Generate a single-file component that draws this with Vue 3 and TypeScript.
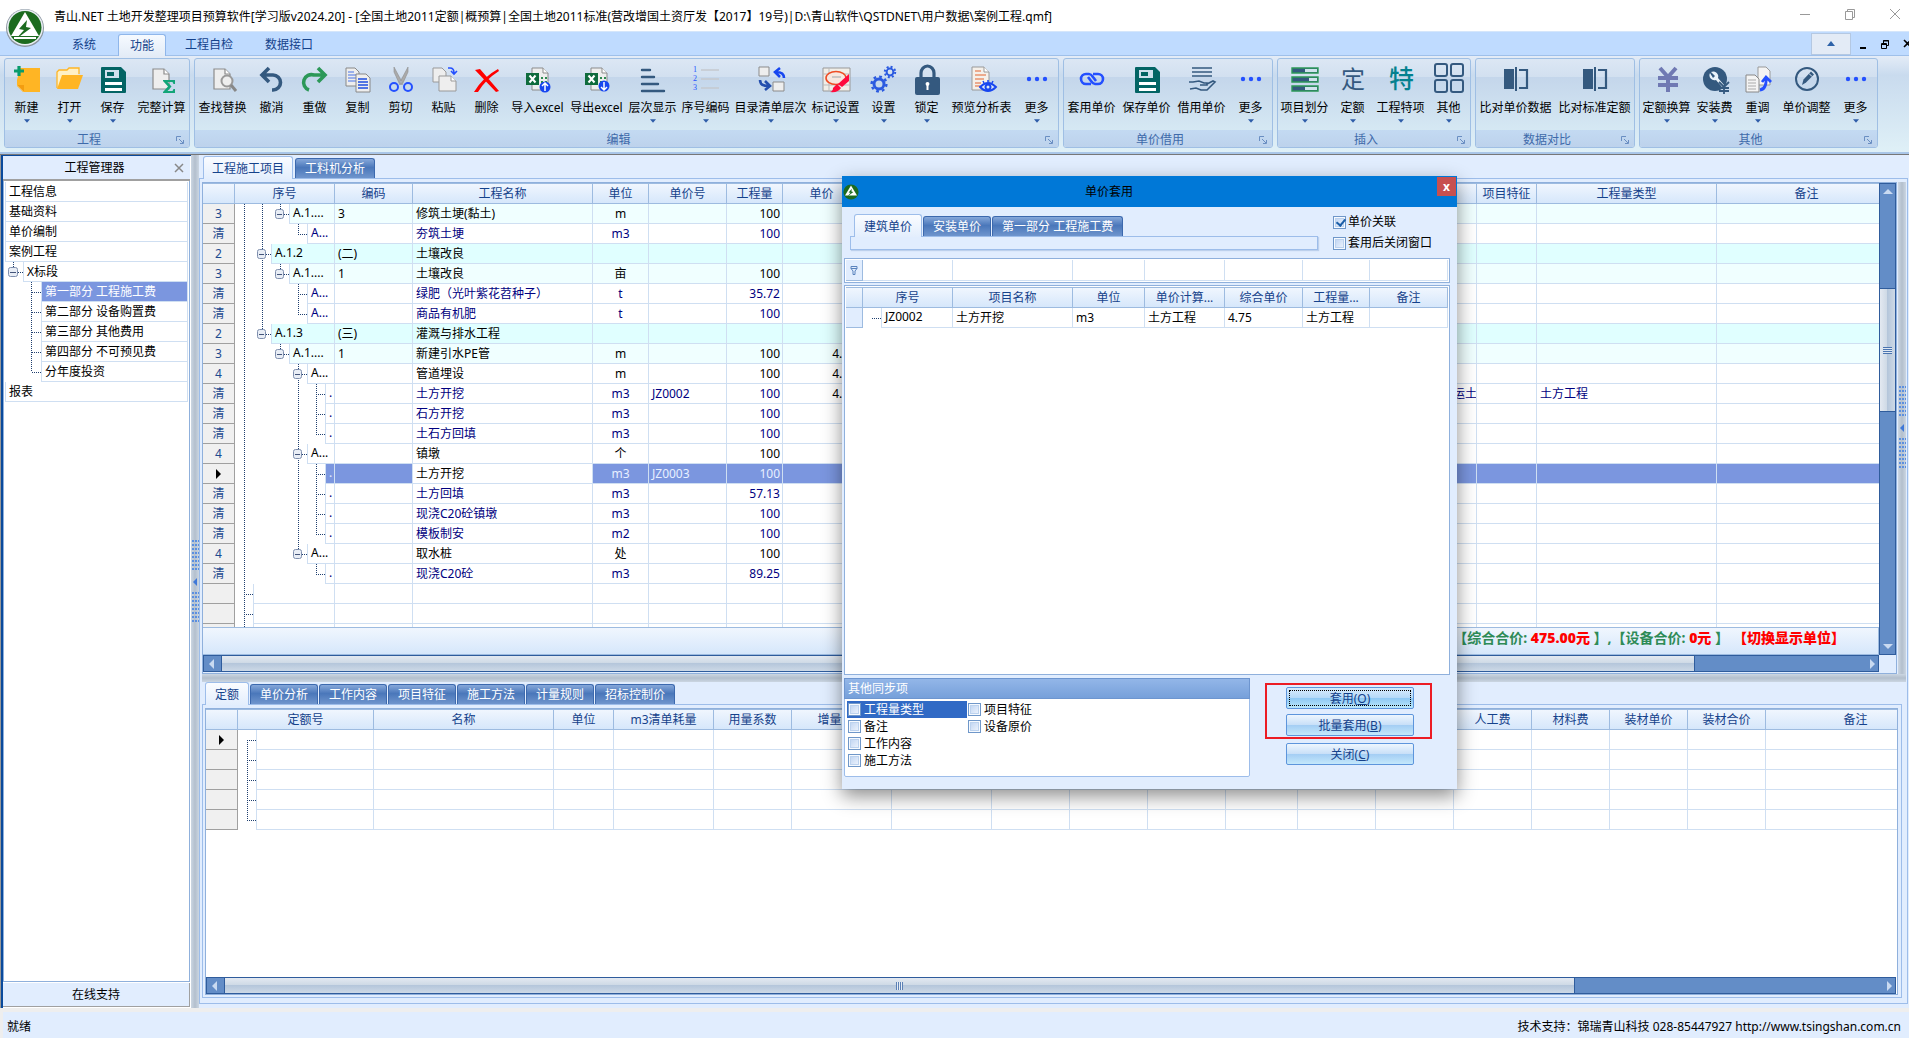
<script setup lang="ts">
import { ref } from 'vue'

interface RibbonItem { label: string; icon: string; width: number; arrow?: boolean }
interface RibbonGroup { name: string; items: RibbonItem[] }
interface Branch { depth: number; full?: number[]; top?: boolean; more?: boolean; box?: boolean }
interface CostRow extends Branch { mark: string; no: string; code?: string; name?: string; unit?: string; priceNo?: string; qty?: string; price?: string; work?: string; kind?: string; tone?: string }
interface Column { title: string; width: number }

const page = '<path d="M5 3h11l5 5v15H5z" fill="#eee" stroke="#8b8b8b" stroke-width="1.2"/><path d="M16 3v5h5" fill="#fff" stroke="#8b8b8b" stroke-width="1.2"/>'
const floppy = '<path d="M3 1h19l5 5v20q0 1-1 1H3q-1 0-1-1V2q0-1 1-1z" fill="#036464"/><path d="M6 4h14v8H6z" fill="#cfe0ee"/><path d="M8 6h10v4H8z" fill="#036464"/><path d="M15 5h3v5h-3z" fill="#cfe0ee"/><path d="M6 16h17v3H6zm0 6h17v3H6z" fill="#fff"/>'
const excel = '<path d="M8 2h11l5 5v17H8z" fill="#eee" stroke="#8b8b8b"/><path d="M19 2v5h5" fill="#fff" stroke="#8b8b8b"/><path d="M17 11h2v2h-2zm4 0h2v2h-2zm-4 4h2v2h-2zm4 0h2v2h-2z" fill="#2c8a50"/><path d="M2 7h13v12H2z" fill="#0f6b3c"/><path d="M5.500 9.500l6 7m0-7l-6 7" stroke="#fff" stroke-width="2"/>'
const compare = '<path d="M2 3h10v20H2z" fill="#34597f"/><path d="M13 1h2v24h-2z" fill="#34597f"/><path d="M17 4h8v18h-8" fill="none" stroke="#34597f" stroke-width="2.200"/>'
const dots = '<circle cx="6" cy="13" r="2.200" fill="#2450ff"/><circle cx="14" cy="13" r="2.200" fill="#2450ff"/><circle cx="22" cy="13" r="2.200" fill="#2450ff"/>'

const icons: Record<string, string> = {
  create: '<path d="M7 2h20v24H10l-6-6v-6z" fill="#ffb524"/><path d="M4 19h7v7z" fill="#fff3cf"/><path d="M4 19h7v7" fill="#f39d10"/><path d="M6 0v10M1 5h10" stroke="#099b6b" stroke-width="3.200"/>',
  open: '<path d="M1 22V6l2-2h8l2-2h10v6" fill="#fff0c4" stroke="#ffb524" stroke-width="1.300"/><path d="M1 23L6 9h21l-5 14z" fill="#ffb524"/>',
  save: floppy,
  calc: page + '<path d="M15 14h12v4h-1.500l-1-2h-5l4 4.500-4 4.500h5l1-2H27v4H15v-1l5-5.500-5-5.500z" fill="#13a578"/>',
  find: page + '<circle cx="18" cy="15" r="5.500" fill="#eee" stroke="#999" stroke-width="2"/><path d="M22 19l5 6" stroke="#888" stroke-width="3"/>',
  undo: '<path d="M11 2L4 9l7 7M5 9h10a7 7 0 0 1 0 15h-1" fill="none" stroke="#34597f" stroke-width="3.600"/>',
  redo: '<path d="M17 2l7 7-7 7M23 9H13a7 7 0 0 0-5 15" fill="none" stroke="#2c9858" stroke-width="3.600"/>',
  copy: '<path d="M2 2h9l4 4v14H2z" fill="#eee" stroke="#888"/><path d="M4 6h6M4 9h8M4 12h8M4 15h8" stroke="#4673e8"/><path d="M12 8h10l4 4v14H12z" fill="#eee" stroke="#888"/><path d="M14 13h9M14 16h10M14 19h10M14 22h10" stroke="#1e4de0" stroke-width="1.400"/>',
  cut: '<path d="M7 1l8 15-2 3L7 6zM21 1l-8 15 2 3 6-13z" fill="#aaa" stroke="#8e8e8e" stroke-width=".6"/><circle cx="7" cy="21" r="4" fill="none" stroke="#2450ff" stroke-width="2"/><circle cx="21" cy="21" r="4" fill="none" stroke="#2450ff" stroke-width="2"/>',
  paste: '<path d="M3 2h9l4 4v10H3z" fill="#eee" stroke="#999"/><path d="M9 10h12l5 5v10H9z" fill="#eee" stroke="#999"/><path d="M21 10v5h5" fill="#fff" stroke="#999"/><path d="M18 2h2q4 0 4 5m-3-2l3 3 3-3" fill="none" stroke="#2450ff" stroke-width="1.600"/>',
  remove: '<path d="M2 4l5-1 19 22-3 1zM25 3l1 2Q12 14 5 26H1Q10 11 25 3z" fill="#f00"/>',
  importx: excel + '<circle cx="21" cy="21" r="5.500" fill="#1746f0"/><path d="M21 25v-8m-3 3l3-3 3 3" fill="none" stroke="#fff" stroke-width="1.500"/>',
  exportx: excel + '<circle cx="21" cy="20" r="5.500" fill="#1746f0"/><path d="M21 16v8m-3-3l3 3 3-3" fill="none" stroke="#fff" stroke-width="1.500"/>',
  level: '<path d="M3 4h8M3 11h12M3 18h16M3 25h22" stroke="#34597f" stroke-width="2.400" stroke-linecap="round"/>',
  number: '<g font-family="Liberation Serif,serif" font-size="8" fill="#2450ff"><text x="1" y="6">1</text><text x="1" y="15">2</text><text x="1" y="24">3</text></g><path d="M9 4h18M9 13h18M9 22h18" stroke="#c5c9ce" stroke-width="1.400"/>',
  catalog: '<path d="M2 1h10v9H2zM16 16h11v9H16z" fill="#eee" stroke="#8b8b8b"/><path d="M27 12q0-6-8-6m4-4l-5 4 5 5" fill="none" stroke="#1746f0" stroke-width="2.600"/><path d="M3 14q0 6 8 6m-3-5l5 5-5 4" fill="none" stroke="#234eae" stroke-width="2.600"/>',
  mark: '<path d="M1 2h27v23H1z" fill="#f0eee8" stroke="#999"/><path d="M7 2v23M1 8h27M1 19h27" stroke="#bbb"/><ellipse cx="14" cy="12" rx="10" ry="6.500" fill="#f7e7df" stroke="#ee4d25" stroke-width="1.600"/><path d="M10 11h9" stroke="#bbb" stroke-width="1.500"/><path d="M27 8v7l-7 6-4-3z" fill="#ff0a3c"/><path d="M15 18l4 4q-3 5-11 4 3-1 3-4z" fill="#ff0a3c"/>',
  gears: '<circle cx="9" cy="18" r="5" fill="none" stroke="#2b5ae0" stroke-width="3"/><circle cx="9" cy="18" r="7.400" fill="none" stroke="#2b5ae0" stroke-width="2.400" stroke-dasharray="2.800 3"/><circle cx="20" cy="6" r="3.400" fill="none" stroke="#2b5ae0" stroke-width="2"/><circle cx="20" cy="6" r="5.200" fill="none" stroke="#2b5ae0" stroke-width="2" stroke-dasharray="2 2.080"/>',
  lock: '<path d="M8 13V7a6.500 7 0 0 1 13 0v6" fill="none" stroke="#34597f" stroke-width="3.200"/><rect x="2" y="11" width="25" height="18" rx="2" fill="#34597f"/><path d="M12.500 18a2 2 0 1 1 4 0l-1 2v4h-2v-4z" fill="#fff"/>',
  preview: '<path d="M4 1h12l5 5v18H4z" fill="#f5f0ea" stroke="#999"/><path d="M16 1v5h5" fill="#fff" stroke="#999"/><path d="M7 5h6M7 9h11M7 13h9M7 17h6M7 20h5" stroke="#e9926f" stroke-width="1.300"/><path d="M12 21q8-8 16 0-8 8-16 0z" fill="#dce8f6" stroke="#1746f0" stroke-width="1.800"/><circle cx="20" cy="21" r="2.500" fill="none" stroke="#1746f0" stroke-width="2"/><path d="M15 15l1 2m4-3v2m5-1l-1 2" stroke="#1746f0" stroke-width="1.500"/>',
  dots,
  chain: '<path d="M13 18H8a5 5 0 0 1 0-10h3q2 0 4 3l3 4M15 8h5a5 5 0 0 1 0 10h-3q-2 0-4-3l-3-4" fill="none" stroke="#2450ff" stroke-width="2.600"/>',
  hand: '<path d="M4 2h20M4 6h20M4 10h20" stroke="#34597f" stroke-width="1.600"/><path d="M1 16h4l6-1 5 2 3 0v2h-7M19 18l6-3 2 1-8 8h-6l-5-2-6 1" fill="none" stroke="#34597f" stroke-width="1.600"/>',
  division: '<g fill="#34597f" stroke="#2c9858" stroke-width="1.400"><path d="M1 2h26v5H1zM1 11h26v5H1zM1 20h26v5H1z"/></g><path d="M14 3h12v3H14zm0 18h12v3H14zm4-9h8v3h-8z" fill="#cfe3ee"/>',
  quota: '<text x="2" y="22" font-family="Noto Sans CJK SC,sans-serif" font-size="24" fill="#34597f">定</text>',
  special: '<text x="2" y="22" font-family="Noto Sans CJK SC,sans-serif" font-size="25" font-weight="500" fill="#04818f">特</text>',
  blocks: '<g fill="none" stroke="#34597f" stroke-width="2"><rect x="0" y="-2" width="12" height="12" rx="2"/><rect x="16" y="-2" width="12" height="12" rx="2"/><rect x="0" y="14" width="12" height="12" rx="2"/><rect x="16" y="14" width="12" height="12" rx="2"/></g>',
  compare,
  yen: '<path d="M7 2l8 9 8-9M15 11v15M5 12h20M5 19h20" fill="none" stroke="#7079b3" stroke-width="4"/>',
  wrench: '<circle cx="14" cy="13" r="12" fill="#34597f"/><path d="M9 7a5 5 0 0 0 6 7l6 7 2-2-6-7a5 5 0 0 0-7-6l4 4-2 2z" fill="#eaf2fa"/><path d="M18 16l5 5 5-5M23 21v7M18 22h10M18 25h10" fill="none" stroke="#34597f" stroke-width="1.800"/>',
  readjust: '<path d="M14 1h8l4 4v14H14z" fill="#f4f4f4" stroke="#999"/><path d="M2 9h9l4 4v13H2z" fill="#f4f4f4" stroke="#888"/><path d="M4 14h8M4 17h8M4 20h8M4 23h8" stroke="#aaa"/><path d="M16 24q7-1 6-13m-4 5l4-5 5 5" fill="none" stroke="#2450ff" stroke-width="2.800"/>',
  pencil: '<circle cx="14" cy="13" r="11" fill="none" stroke="#34597f" stroke-width="2"/><path d="M9 19l1.500-5.500L18 5.500l3 3-8 8z" fill="#34597f"/><path d="M16 7.500l3 3" stroke="#dfe9f5"/>'
}

const item = (label: string, icon: string, width: number, arrow = false): RibbonItem => ({ label, icon, width, arrow })
const groups: RibbonGroup[] = [
  { name: '工程', items: [item('新建', 'create', 43, true), item('打开', 'open', 43, true), item('保存', 'save', 43, true), item('完整计算', 'calc', 55)] },
  { name: '编辑', items: [
    item('查找替换', 'find', 55), item('撤消', 'undo', 43), item('重做', 'redo', 43), item('复制', 'copy', 43), item('剪切', 'cut', 43),
    item('粘贴', 'paste', 43), item('删除', 'remove', 43), item('导入excel', 'importx', 59), item('导出excel', 'exportx', 59),
    item('层次显示', 'level', 53, true), item('序号编码', 'number', 53, true), item('目录清单层次', 'catalog', 77, true), item('标记设置', 'mark', 53, true),
    item('设置', 'gears', 43, true), item('锁定', 'lock', 43, true), item('预览分析表', 'preview', 67), item('更多', 'dots', 43, true)] },
  { name: '单价借用', items: [item('套用单价', 'chain', 55), item('保存单价', 'save', 55), item('借用单价', 'hand', 55), item('更多', 'dots', 43, true)] },
  { name: '插入', items: [item('项目划分', 'division', 53, true), item('定额', 'quota', 43, true), item('工程特项', 'special', 53, true), item('其他', 'blocks', 43, true)] },
  { name: '数据对比', items: [item('比对单价数据', 'compare', 79), item('比对标准定额', 'compare', 79)] },
  { name: '其他', items: [item('定额换算', 'yen', 53, true), item('安装费', 'wrench', 43, true), item('重调', 'readjust', 43, true), item('单价调整', 'pencil', 55), item('更多', 'dots', 43, true)] }
]

const navRows: { label: string; level: number; last?: boolean }[] = [
  { label: '工程信息', level: 0 }, { label: '基础资料', level: 0 }, { label: '单价编制', level: 0 }, { label: '案例工程', level: 0 },
  { label: 'X标段', level: 1 },
  { label: '第一部分 工程施工费', level: 2 }, { label: '第二部分 设备购置费', level: 2 }, { label: '第三部分 其他费用', level: 2 },
  { label: '第四部分 不可预见费', level: 2 }, { label: '分年度投资', level: 2, last: true },
  { label: '报表', level: 0 }
]

const costColumns: Column[] = [
  { title: '', width: 32 }, { title: '序号', width: 100 }, { title: '编码', width: 78 }, { title: '工程名称', width: 180 }, { title: '单位', width: 56 },
  { title: '单价号', width: 78 }, { title: '工程量', width: 56 }, { title: '单价', width: 78 }, { title: '', width: 541 }, { title: '', width: 75 },
  { title: '项目特征', width: 60 }, { title: '工程量类型', width: 180 }, { title: '备注', width: 180 }
]
const sum = (columns: Column[]): number => columns.reduce((total, c) => total + c.width, 0)

const leaf = (name: string, unit: string, qty: string, full: number[], more: boolean, extra: Partial<CostRow> = {}): CostRow =>
  ({ mark: '清', no: '.', depth: 4, name, unit, qty, full, more, top: true, tone: 'leaf', ...extra })
const costRows: CostRow[] = [
  { mark: '3', no: 'A.1....', code: '3', name: '修筑土埂(黏土)', unit: 'm', qty: '100', depth: 2, full: [0, 1], top: true, box: true, tone: 'third' },
  leaf('夯筑土埂', 'm3', '100', [0, 1], false, { no: 'A...', depth: 3 }),
  { mark: '2', no: 'A.1.2', code: '(二)', name: '土壤改良', depth: 1, full: [0], top: true, more: true, box: true, tone: 'second' },
  { mark: '3', no: 'A.1....', code: '1', name: '土壤改良', unit: '亩', qty: '100', depth: 2, full: [0, 1], top: true, box: true, tone: 'third' },
  leaf('绿肥（光叶紫花苕种子）', 't', '35.72', [0, 1], true, { no: 'A...', depth: 3 }),
  leaf('商品有机肥', 't', '100', [0, 1], false, { no: 'A...', depth: 3 }),
  { mark: '2', no: 'A.1.3', code: '(三)', name: '灌溉与排水工程', depth: 1, full: [0], top: true, box: true, tone: 'second' },
  { mark: '3', no: 'A.1....', code: '1', name: '新建引水PE管', unit: 'm', qty: '100', price: '4.75', depth: 2, full: [0], top: true, box: true, tone: 'third' },
  { mark: '4', no: 'A...', name: '管道埋设', unit: 'm', qty: '100', price: '4.75', depth: 3, full: [0], top: true, more: true, box: true },
  leaf('土方开挖', 'm3', '100', [0, 3], true, { priceNo: 'JZ0002', price: '4.75', work: '自卸汽车运土', kind: '土方工程' }),
  leaf('石方开挖', 'm3', '100', [0, 3], true),
  leaf('土石方回填', 'm3', '100', [0, 3], false),
  { mark: '4', no: 'A...', name: '镇墩', unit: '个', qty: '100', depth: 3, full: [0], top: true, more: true, box: true },
  leaf('土方开挖', 'm3', '100', [0, 3], true, { mark: '▶', priceNo: 'JZ0003', tone: 'picked' }),
  leaf('土方回填', 'm3', '57.13', [0, 3], true),
  leaf('现浇C20砼镇墩', 'm3', '100', [0, 3], true),
  leaf('模板制安', 'm2', '100', [0, 3], false),
  { mark: '4', no: 'A...', name: '取水桩', unit: '处', qty: '100', depth: 3, full: [0], top: true, box: true },
  leaf('现浇C20砼', 'm3', '89.25', [0], false),
  { mark: '', no: '', depth: 0, top: true, more: true },
  { mark: '', no: '', depth: 0, top: true, more: true },
  { mark: '', no: '', depth: 0, top: true, more: true }
]

const treePath = (b: Branch): string => {
  const own = b.depth * 18 + 9
  let d = (b.full ?? []).map((level) => `M${level * 18 + 9}.5 0v20`).join('')
  if (b.top) d += `M${own}.5 0v10`
  if (b.more) d += `M${own}.5 10v10`
  return d + `M${own} 10.5h9`
}

const detailTabs = ['定额', '单价分析', '工作内容', '项目特征', '施工方法', '计量规则', '招标控制价']
const detailColumns: Column[] = [
  { title: '', width: 32 }, { title: '定额号', width: 136 }, { title: '名称', width: 180 }, { title: '单位', width: 60 }, { title: 'm3清单耗量', width: 100 },
  { title: '用量系数', width: 78 }, { title: '增量系数', width: 100 }, { title: '', width: 100 }, { title: '', width: 78 }, { title: '', width: 78 },
  { title: '', width: 78 }, { title: '', width: 72 }, { title: '', width: 78 }, { title: '', width: 78 }, { title: '人工费', width: 78 },
  { title: '材料费', width: 78 }, { title: '装材单价', width: 78 }, { title: '装材合价', width: 78 }, { title: '备注', width: 180 }
]

const dialogColumns: Column[] = [
  { title: '', width: 17 }, { title: '序号', width: 90 }, { title: '项目名称', width: 120 }, { title: '单位', width: 72 },
  { title: '单价计算...', width: 80 }, { title: '综合单价', width: 78 }, { title: '工程量...', width: 67 }, { title: '备注', width: 78 }
]
const syncItems = [['工程量类型', '备注', '工作内容', '施工方法'], ['项目特征', '设备原价']]

const linked = ref(true)
const closeAfter = ref(false)
const dialogOpen = ref(true)
</script>

<template>
  <div class="app">
    <header class="titlebar">
      <h1>青山.NET 土地开发整理项目预算软件[学习版v2024.20] - [全国土地2011定额|概预算|全国土地2011标准(营改增国土资厅发【2017】19号)|D:\青山软件\QSTDNET\用户数据\案例工程.qmf]</h1>
      <div class="window-buttons">
        <button type="button" aria-label="最小化"><svg width="12" height="12"><path d="M1 6.500h10" stroke="#999" /></svg></button>
        <button type="button" aria-label="还原"><svg width="12" height="12" fill="none" stroke="#999"><path d="M1.500 3.500h7v8h-7zM3.500 3V1.500h7v8H9" /></svg></button>
        <button type="button" aria-label="关闭"><svg width="12" height="12"><path d="M1 1l10 10M11 1L1 11" stroke="#999" /></svg></button>
      </div>
    </header>

    <svg class="app-logo" viewBox="0 0 40 40" aria-hidden="true">
      <circle cx="20" cy="20" r="19" fill="#8b95a0" /><circle cx="20" cy="19.500" r="18" fill="#e9eff4" /><circle cx="20" cy="19.500" r="16.500" fill="#1c6b1f" />
      <path d="M20 4L6 28h28z" fill="#fff" /><path d="M22 12l-8 9 5 1-8 9 15-11-5-1z" fill="#1c6b1f" /><path d="M9 30h22" stroke="#fff" stroke-width="2" />
    </svg>

    <nav class="ribbon-tabs">
      <button type="button" class="ribbon-tab short">系统</button>
      <button type="button" class="ribbon-tab short on">功能</button>
      <button type="button" class="ribbon-tab">工程自检</button>
      <button type="button" class="ribbon-tab">数据接口</button>
      <div class="mdi-buttons">
        <button type="button" class="collapse" aria-label="折叠功能区"><svg width="8" height="5"><path d="M0 5l4-5 4 5z" fill="#2d62a8" /></svg></button>
        <button type="button" aria-label="最小化子窗口"><svg width="12" height="12"><path d="M3 9h6v2H3z" /></svg></button>
        <button type="button" aria-label="还原子窗口"><svg width="12" height="12" fill="none" stroke="#000"><path d="M2.500 5.500h5v5h-5zM2 6.500h6M4.500 5V2.500h5v5H8M4 3h6" /></svg></button>
        <button type="button" aria-label="关闭子窗口"><svg width="12" height="12"><path d="M3 2l7 7M10 2L3 9" stroke="#000" stroke-width="1.600" /></svg></button>
      </div>
    </nav>

    <div class="ribbon">
      <section v-for="group in groups" :key="group.name" class="ribbon-group">
        <div class="ribbon-items">
          <button v-for="entry in group.items" :key="entry.label" type="button" class="ribbon-item" :style="{ width: entry.width + 'px' }">
            <svg class="ribbon-icon" viewBox="0 0 28 28" aria-hidden="true" v-html="icons[entry.icon]"></svg>
            <span>{{ entry.label }}</span>
            <svg v-if="entry.arrow" class="ribbon-arrow" viewBox="0 0 5 3" aria-hidden="true"><path d="M0 0h5L2.500 3z" fill="#2d5ca8" /></svg>
          </button>
        </div>
        <div class="ribbon-caption">
          <span>{{ group.name }}</span>
          <svg width="8" height="8" fill="none" stroke="#6a8ec2" aria-hidden="true"><path d="M.5 5V.5H5M3 3l4 4M7.500 4v3.500H4" /></svg>
        </div>
      </section>
    </div>

    <div class="workspace">
      <aside class="sidebar">
        <div class="sidebar-head">
          <h2>工程管理器</h2>
          <button type="button" aria-label="关闭面板"><svg width="10" height="10"><path d="M1 1l8 8M9 1L1 9" stroke="#888" stroke-width="1.500" /></svg></button>
        </div>
        <ul class="nav-tree">
          <li v-for="(row, i) in navRows" :key="row.label">
            <svg v-if="row.level" class="nav-lines" :width="row.level * 18" height="20" aria-hidden="true">
              <path v-if="row.level === 1" d="M8.500 0v10M9 10.500h9" class="dotted" />
              <path v-else :d="row.last ? 'M26.5 0v10M27 10.5h9' : 'M26.5 0v20M27 10.5h9'" class="dotted" />
              <g v-if="row.level === 1"><rect x="3.500" y="5.500" width="9" height="9" rx="2" fill="#e8edf5" stroke="#7f8fae" /><path d="M5 10.500h6" stroke="#44557a" /></g>
            </svg>
            <a href="#" :class="{ on: i === 5 }">{{ row.label }}</a>
          </li>
        </ul>
        <button type="button" class="support">在线支持</button>
      </aside>

      <div class="side-splitter"><i class="dots"></i><svg width="4" height="8"><path d="M4 0v8L0 4z" fill="#3f78d8" /></svg><i class="dots"></i></div>

      <main class="main">
        <div class="tabs main-tabs">
          <button type="button" class="tab on">工程施工项目</button>
          <button type="button" class="tab">工料机分析</button>
        </div>
        <div class="main-page">
          <div class="top-pane">
            <div class="grid-frame cost-frame">
              <div class="viewport">
                <table :style="{ width: sum(costColumns) + 'px' }">
                  <colgroup><col v-for="(c, i) in costColumns" :key="i" :style="{ width: c.width + 'px' }" /></colgroup>
                  <thead><tr><th v-for="(c, i) in costColumns" :key="i" scope="col">{{ c.title }}</th></tr></thead>
                  <tbody>
                    <tr v-for="(row, r) in costRows" :key="r" :class="row.tone">
                      <td class="mark"><svg v-if="row.mark === '▶'" width="5" height="10"><path d="M0 0l5 5-5 5z" /></svg><template v-else>{{ row.mark }}</template></td>
                      <td class="tree-cell">
                        <div class="tree">
                          <svg :width="row.depth * 18 + 18" height="20" aria-hidden="true">
                            <path :d="treePath(row)" class="dotted" />
                            <g v-if="row.box" :transform="`translate(${row.depth * 18 + 4} 5)`"><rect x=".5" y=".5" width="8" height="9" rx="2" fill="#e8edf5" stroke="#7f8fae" /><path d="M2 5.500h5" stroke="#44557a" /></g>
                          </svg>
                          <span>{{ row.no }}</span>
                        </div>
                      </td>
                      <td>{{ row.code }}</td>
                      <td class="name">{{ row.name }}</td>
                      <td class="center">{{ row.unit }}</td>
                      <td>{{ row.priceNo }}</td>
                      <td class="right">{{ row.qty }}</td>
                      <td class="right dark">{{ row.price }}</td>
                      <td></td>
                      <td>{{ row.work }}</td>
                      <td></td>
                      <td>{{ row.kind }}</td>
                      <td></td>
                    </tr>
                  </tbody>
                </table>
              </div>
              <div class="summary">
                <span>【综合合价: <b>475.00元</b> 】,</span><span>【设备合价: <b>0元</b> 】</span><b>【切换显示单位】</b>
              </div>
              <div class="hscroll">
                <i class="knob"></i><i class="thumb cost-thumb"></i><i class="rail"></i>
              </div>
              <div class="vscroll">
                <svg width="10" height="5"><path d="M0 5l5-5 5 5z" fill="#c9daf1" /></svg>
                <i class="vthumb"></i><i class="vrail"></i>
                <svg width="10" height="5"><path d="M0 0h10L5 5z" fill="#c9daf1" /></svg>
              </div>
            </div>
            <div class="right-strip"><i class="dots"></i><svg width="4" height="8"><path d="M4 0v8L0 4z" fill="#3f78d8" /></svg><i class="dots"></i></div>
          </div>
          <div class="mid-splitter"></div>
          <div class="bottom-pane">
            <div class="tabs detail-tabs">
              <button v-for="(t, i) in detailTabs" :key="t" type="button" class="tab" :class="{ on: i === 0 }">{{ t }}</button>
            </div>
            <div class="detail-page">
              <div class="grid-frame detail-frame">
                <div class="viewport">
                  <table :style="{ width: sum(detailColumns) + 'px' }">
                    <colgroup><col v-for="(c, i) in detailColumns" :key="i" :style="{ width: c.width + 'px' }" /></colgroup>
                    <thead><tr><th v-for="(c, i) in detailColumns" :key="i" scope="col">{{ c.title }}</th></tr></thead>
                    <tbody>
                      <tr v-for="r in 5" :key="r">
                        <td class="mark"><svg v-if="r === 1" width="5" height="10"><path d="M0 0l5 5-5 5z" /></svg></td>
                        <td class="tree-cell"><div class="tree"><svg width="18" height="20" aria-hidden="true"><path :d="treePath({ depth: 0, top: r > 1, more: r < 5 })" class="dotted" /></svg><span></span></div></td>
                        <td v-for="c in detailColumns.length - 2" :key="c"></td>
                      </tr>
                    </tbody>
                  </table>
                </div>
                <div class="hscroll">
                  <i class="knob"></i><i class="thumb detail-thumb"></i><i class="rail"></i>
                </div>
              </div>
            </div>
          </div>
        </div>
      </main>
    </div>

    <footer class="statusbar"><span>就绪</span><span>技术支持：锦瑞青山科技 028-85447927 http://www.tsingshan.com.cn</span></footer>

    <div v-if="dialogOpen" class="dialog" role="dialog" aria-label="单价套用">
      <div class="dialog-title">
        <svg width="16" height="16" viewBox="0 0 40 40" aria-hidden="true"><circle cx="20" cy="20" r="19" fill="#1c6b1f" /><path d="M20 4L5 29h30z" fill="#fff" /><path d="M22 12l-8 9 5 1-8 9 15-11-5-1z" fill="#1c6b1f" /></svg>
        <h2>单价套用</h2>
        <button type="button" aria-label="关闭" @click="dialogOpen = false">x</button>
      </div>
      <div class="dialog-top">
        <div class="dialog-tabs">
          <div class="tabs">
            <button type="button" class="tab on">建筑单价</button>
            <button type="button" class="tab">安装单价</button>
            <button type="button" class="tab">第一部分 工程施工费</button>
          </div>
          <div class="dialog-strip"></div>
        </div>
        <div class="dialog-checks">
          <label><input v-model="linked" type="checkbox" />单价关联</label>
          <label><input v-model="closeAfter" type="checkbox" />套用后关闭窗口</label>
        </div>
      </div>
      <div class="filter-row">
        <span v-for="(c, i) in dialogColumns" :key="i" :style="{ width: c.width + 'px' }">
          <svg v-if="i === 0" width="8" height="10" fill="none" stroke="#5a83bd" aria-hidden="true"><path d="M1 1.500h6v2L5 6v3.500H3V6L1 3.500zM1 3.500h6" /></svg>
        </span>
      </div>
      <div class="grid-frame dialog-grid">
        <table :style="{ width: sum(dialogColumns) + 'px' }">
          <colgroup><col v-for="(c, i) in dialogColumns" :key="i" :style="{ width: c.width + 'px' }" /></colgroup>
          <thead><tr><th v-for="(c, i) in dialogColumns" :key="i" scope="col">{{ c.title }}</th></tr></thead>
          <tbody>
            <tr>
              <td class="blue-mark"></td>
              <td class="tree-cell"><div class="tree"><svg width="18" height="20" aria-hidden="true"><path :d="treePath({ depth: 0 })" class="dotted" /></svg><span>JZ0002</span></div></td>
              <td>土方开挖</td><td>m3</td><td>土方工程</td><td>4.75</td><td>土方工程</td><td></td>
            </tr>
          </tbody>
        </table>
      </div>
      <div class="dialog-bottom">
        <fieldset class="sync">
          <legend>其他同步项</legend>
          <div v-for="(column, c) in syncItems" :key="c" class="sync-column">
            <label v-for="(name, n) in column" :key="name" :class="{ on: c === 0 && n === 0 }"><input type="checkbox" />{{ name }}</label>
          </div>
        </fieldset>
        <div class="actions">
          <div class="marked">
            <button type="button" class="push focus">套用(<u>O</u>)</button>
            <button type="button" class="push">批量套用(<u>B</u>)</button>
          </div>
          <button type="button" class="push close" @click="dialogOpen = false">关闭(<u>C</u>)</button>
        </div>
      </div>
    </div>
  </div>
</template>

<style>
html, body { margin: 0; background: #e1edfe; }
</style>

<style scoped>
.app { position: relative; display: flex; flex-direction: column; height: 100vh; min-height: 800px; overflow: hidden; background: #e1edfe; color: #000; font: 12px/18px "Noto Sans", "Noto Sans CJK SC", sans-serif; }
.app * { box-sizing: border-box; }
button { margin: 0; padding: 0; border: 0; background: none; font: inherit; color: inherit; }
h1, h2 { margin: 0; font: inherit; }
i { display: block; }

.titlebar { display: flex; flex: none; justify-content: space-between; height: 31px; padding-left: 54px; background: #fff; overflow: hidden; }
.titlebar h1 { padding-top: 8px; white-space: nowrap; }
.window-buttons { display: flex; gap: 33px; padding: 8px 8px 0 0; }
.window-buttons button { width: 12px; height: 12px; line-height: 0; }
.app-logo { position: absolute; left: 5px; top: 8px; width: 40px; height: 40px; z-index: 2; }

.ribbon-tabs { display: flex; flex: none; align-items: flex-end; height: 25px; padding-left: 60px; gap: 10px; background: #bfdbff; border-bottom: 1px solid #9fc0ea; border-top: 1px solid #d5e6fb; }
.ribbon-tab { width: 70px; height: 22px; margin-bottom: -1px; color: #15428b; }
.ribbon-tab.short { width: 48px; }
.ribbon-tab.on { margin-right: -2px; border: 1px solid #8fb6ea; border-bottom: 0; border-radius: 3px 3px 0 0; background: linear-gradient(#f6faff, #e3ecf7); }
.mdi-buttons { display: flex; align-self: center; align-items: center; gap: 10px; height: 22px; margin-left: auto; margin-right: -4px; }
.mdi-buttons button { width: 12px; height: 12px; line-height: 0; }
.mdi-buttons .collapse { width: 40px; height: 22px; margin-right: -4px; border: 1px solid #b4c8e2; background: #e3ebf6; }

.ribbon { display: flex; flex: none; gap: 4px; height: 98px; padding: 2px 4px 4px; background: linear-gradient(#e4ecf7, #c9dbee 20%, #dff0f7); border-bottom: 2px solid #a9c6e8; overflow: hidden; }
.ribbon-group { display: flex; flex: none; flex-direction: column; border: 1px solid #9fbfe4; border-radius: 3px; background: linear-gradient(#dce7f4, #d2e0f0 20%, #c4d6eb 21%, #dbeef6); overflow: hidden; }
.ribbon-items { display: flex; flex: 1; }
.ribbon-item { display: flex; flex-direction: column; align-items: center; white-space: nowrap; }
.ribbon-item span { line-height: 18px; }
.ribbon-icon { width: 28px; height: 28px; margin: 7px 0 5px; overflow: visible; }
.ribbon-arrow { width: 6px; height: 4px; margin-top: 2px; }
.ribbon-caption { display: flex; align-items: center; height: 17px; padding: 2px 5px 0 0; background: linear-gradient(#c3daf2, #bdd2ec); color: #3e6aaa; }
.ribbon-caption span { flex: 1; padding-right: 3px; text-align: center; line-height: 15px; }

.workspace { display: flex; flex: 1; min-height: 0; border-top: 1px solid #777; }
.sidebar { display: flex; flex: none; flex-direction: column; width: 189px; margin: 0 0 0 2px; padding: 0 1px 0 0; border-left: 1px solid #0a4a9c; border-top: 1px solid #0a4a9c; background: #fff; box-shadow: -1px 0 #0a4a9c, -2px 0 #999; }
.sidebar-head { display: flex; flex: none; align-items: center; height: 25px; padding-right: 6px; background: #e1edfe; border-bottom: 2px solid #a0a0a0; }
.sidebar-head h2 { flex: 1; padding-left: 12px; text-align: center; }
.sidebar-head button { width: 10px; height: 10px; line-height: 0; }
.nav-tree { flex: 1; min-height: 0; margin: 0; padding: 1px 1px 0 1px; border: 1px solid #8fb0dc; border-top: 0; list-style: none; overflow: hidden; }
.nav-tree li { display: flex; height: 20px; }
.nav-tree a { flex: 1; padding-left: 3px; border: solid #cfdff2; border-width: 0 1px 1px; color: #000; line-height: 19px; text-decoration: none; white-space: nowrap; }
.nav-tree a.on { background: #7b96df; color: #fff; }
.nav-lines { flex: none; }
.dotted { fill: none; stroke: #1f3f6f; stroke-width: 1; stroke-dasharray: 1 1; }
.support { flex: none; height: 24px; margin: 1px 0 1px; border: solid #a0a0a0; border-width: 0 1px 1px 0; background: #e1edfe; }
.side-splitter, .right-strip { display: flex; flex: none; flex-direction: column; align-items: center; justify-content: center; gap: 6px; width: 8px; background: linear-gradient(90deg, #cbd6e2, #b3bfcd 50%, #cbd6e2); }
.dots { width: 7px; height: 32px; background: radial-gradient(circle at 1px 1px, #5b8fe0 1px, transparent 1px) 0 0 / 3px 4px; }
.right-strip { margin-left: 1px; }

.main { display: flex; flex: 1; flex-direction: column; min-width: 0; padding: 0 1px 4px 0; }
.tabs { display: flex; flex: none; align-items: flex-end; gap: 2px; }
.main-tabs { height: 23px; padding-left: 4px; }
.tab { height: 20px; padding: 0 9px; border: 1px solid #3c69ae; border-bottom: 0; border-radius: 3px 3px 0 0; background: linear-gradient(#86a8da, #4a77ba 45%, #6f95cd); color: #fff; line-height: 19px; white-space: nowrap; }
.tab.on { position: relative; height: 23px; margin-bottom: -1px; border-color: #9dbdea; background: linear-gradient(#fafcff, #e3eefd); color: #15428b; }
.main-tabs .tab.on { padding: 0 8px; }
.main-page { display: flex; flex: 1; flex-direction: column; min-height: 0; padding: 3px 1px 5px 2px; border: 1px solid #9dbdea; }
.top-pane { display: flex; flex: 492 1 0; min-height: 0; }
.grid-frame { min-width: 0; min-height: 0; border: 1px solid #8fb0dc; background: #fff; overflow: hidden; }
.cost-frame { display: grid; flex: 1; grid-template-columns: minmax(0, 1fr) 17px; grid-template-rows: minmax(0, 1fr) 28px 18px; background: #e1edfe; }
.viewport { min-width: 0; min-height: 0; background: #fff; overflow: hidden; }

table { table-layout: fixed; border-collapse: separate; border-spacing: 0; }
th { height: 21px; padding: 0; border: solid #9dbbe0; border-width: 1px 1px 1px 0; background: linear-gradient(#f0f6fe, #d6e7fb); color: #15428b; font-weight: normal; line-height: 18px; overflow: hidden; white-space: nowrap; }
td { height: 20px; padding: 0 3px; border: solid #cfdff2; border-width: 0 1px 1px 0; line-height: 18px; overflow: hidden; white-space: nowrap; }
.center { text-align: center; }
.right { text-align: right; padding-right: 2px; }
.right.dark { padding-right: 4px; }
.mark { padding: 0; border-color: #a0a0a0; background: #f0f0f0; color: #1d4a8f; text-align: center; }
.mark svg { vertical-align: -1px; }
.blue-mark { border-color: #9dbbe0; background: #e1edfe; }
.tree-cell { padding: 0; border-bottom: 0; }
.tree { display: flex; height: 20px; background: #fff; }
.tree svg { flex: none; }
.tree span { flex: 1; min-width: 0; padding-left: 3px; border: solid #cfdff2; border-width: 0 0 1px 1px; line-height: 18px; overflow: hidden; }
.second td:not(.mark), .second .tree span { background: #e0ffff; }
.third td:not(.mark), .third .tree span { background: #f0ffff; }
.leaf td:not(.mark):not(.dark) { color: #000080; }
.picked td:not(.mark):not(.name):not(.tree-cell), .picked .tree span { background: #7b96df; color: #e8f0ff; }

.summary { display: flex; align-items: flex-start; justify-content: flex-end; padding: 1px 33px 0 0; border: 1px solid #9dbbe0; border-left: 0; background: linear-gradient(#f0f6fe, #d6e7fb); color: #2e8b57; font-size: 14px; font-weight: bold; line-height: 18px; white-space: nowrap; }
.summary > b { padding-left: 4px; }
.summary b { color: #f00; }
.hscroll { display: flex; height: 17px; border: 1px solid #2f5c9c; background: #638dc7; }
.knob { flex: none; width: 18px; border-right: 1px solid #2f5c9c; }
.knob::before { content: ""; display: block; width: 0; margin: 3px 0 0 5px; border: solid transparent; border-width: 5px 5px 5px 0; border-right-color: #c9daf1; }
.thumb { border-right: 1px solid #2f5c9c; background: linear-gradient(#e3e9f1, #cfdae6 45%, #b3c5da 46%, #cdd9e6); }
.cost-thumb { width: 88%; }
.detail-thumb { display: flex; align-items: center; justify-content: center; width: 80%; }
.detail-thumb::before { content: ""; width: 7px; height: 8px; background: repeating-linear-gradient(90deg, #5b80b5 0 1px, #e6edf5 1px 2px); }
.rail { display: flex; flex: 1; justify-content: flex-end; }
.rail::after { content: ""; height: 0; margin: 3px 3px 0 0; border: solid transparent; border-width: 5px 0 5px 5px; border-left-color: #c9daf1; }
.vscroll { display: flex; grid-column: 2; grid-row: 1 / 3; flex-direction: column; align-items: center; padding: 5px 0; border: 1px solid #2f5c9c; background: #638dc7; }
.vscroll svg { flex: none; }
.vthumb { display: flex; align-items: center; justify-content: center; flex: none; width: 15px; height: 27%; margin-top: 94px; border: solid #2f5c9c; border-width: 1px 0; background: linear-gradient(90deg, #e3e9f1, #cfdae6 45%, #b3c5da 46%, #cdd9e6); }
.vthumb::before { content: ""; width: 9px; height: 7px; background: repeating-linear-gradient(#4a74b0 0 1px, #dfe8f2 1px 2px); }
.vrail { flex: 1; }
.mid-splitter { flex: none; height: 8px; background: linear-gradient(#cbd6e2, #b3bfcd 50%, #cbd6e2); }

.bottom-pane { display: flex; flex: 316 1 0; flex-direction: column; min-height: 0; padding-right: 4px; }
.detail-tabs { height: 22px; padding-left: 3px; gap: 1px; }
.detail-tabs .tab.on { width: 44px; }
.detail-page { display: flex; flex: 1; min-height: 0; padding: 3px 3px 2px 2px; border: 1px solid #9dbdea; }
.detail-frame { display: flex; flex: 1; flex-direction: column; }
.detail-frame .viewport { flex: 1; }
.detail-frame .hscroll { flex: none; margin-right: 1px; }

.statusbar { display: flex; flex: none; align-items: center; justify-content: space-between; height: 30px; padding: 3px 8px 0 7px; border-top: 4px solid #eee; box-shadow: inset 3px 0 #eee; white-space: nowrap; }

.dialog { position: absolute; left: 842px; top: 176px; z-index: 5; display: flex; flex-direction: column; width: 615px; height: 613px; padding-bottom: 12px; background: #e1edfe; box-shadow: 0 7px 18px rgba(0, 0, 0, 0.45); }
.dialog-title { display: flex; flex: none; align-items: center; height: 31px; padding: 0 1px; background: #0078d7; }
.dialog-title h2 { flex: 1; padding: 1px 78px 0 0; text-align: center; }
.dialog-title button { align-self: flex-start; width: 19px; height: 19px; margin-top: 1px; background: #c75050; color: #fff; font-weight: bold; line-height: 16px; }
.dialog-top { display: flex; flex: none; justify-content: space-between; height: 51px; padding: 6px 25px 0 8px; }
.dialog-tabs { width: 468px; }
.dialog-tabs .tabs { height: 23px; padding-left: 4px; gap: 1px; }
.dialog-strip { height: 14px; border: 1px solid #9dbdea; box-shadow: 1px 1px 1px #bcd0ec; }
.dialog-checks { display: flex; flex-direction: column; gap: 3px; }
.dialog-checks label { display: flex; align-items: center; gap: 2px; height: 18px; }
input[type="checkbox"] { flex: none; width: 13px; height: 13px; margin: 0; appearance: none; border: 1px solid #6f97c9; background: linear-gradient(135deg, #b9d0f0, #f4f8ff); box-shadow: inset 0 0 0 1px #f6faff, inset 0 0 0 2px #bcd2ee; }
input[type="checkbox"]:checked::before { content: ""; display: block; width: 4px; height: 7px; margin: 0 0 0 4px; border: solid #1c5fa8; border-width: 0 2px 2px 0; transform: rotate(40deg); }
.filter-row { display: flex; flex: none; height: 25px; margin: 0 7px 2px 2px; padding: 1px; border: 1px solid #8fb0dc; background: #fff; }
.filter-row span { flex: none; border: solid #cfdff2; border-width: 0 1px 1px 0; }
.filter-row span:first-child { display: flex; align-items: center; justify-content: center; border-color: #9dbbe0; background: #e1edfe; }
.dialog-grid { flex: 1; margin: 0 7px 3px 2px; padding: 1px 1px 0; }
.dialog-bottom { display: flex; flex: none; height: 99px; padding-left: 2px; }
.sync { display: flex; flex: none; width: 406px; min-width: 0; margin: 0; padding: 22px 2px 1px; border: 1px solid #9dbdea; border-radius: 2px; background: #fff; position: relative; }
.sync legend { position: absolute; left: -1px; right: -1px; top: -1px; height: 21px; padding: 0 3px; border: 1px solid #6d95cf; background: linear-gradient(#93b6e8, #76a0da); color: #fff; line-height: 19px; }
.sync-column { width: 120px; }
.sync label { display: flex; align-items: center; gap: 3px; height: 17px; padding-left: 1px; line-height: 17px; }
.sync label.on { background: #316ac5; color: #fff; }
.actions { display: flex; flex-direction: column; align-items: flex-start; gap: 4px; margin: 5px 0 0 15px; }
.marked { display: flex; flex-direction: column; gap: 5px; padding: 2px 16px 1px 19px; border: 2px solid #ec1c24; }
.push { width: 128px; height: 22px; border: 1px solid #5d95dc; border-radius: 2px; background: linear-gradient(#eef6fe, #c9e0f8 48%, #a3cdf4 50%, #c4e8fb); color: #15428b; line-height: 19px; }
.push.close { margin-left: 21px; }
.push.focus { background: linear-gradient(#d9ecfd, #b6daf8 48%, #8dc7f3 50%, #b9e8fc); outline: 1px dotted #000; outline-offset: -4px; }
</style>
